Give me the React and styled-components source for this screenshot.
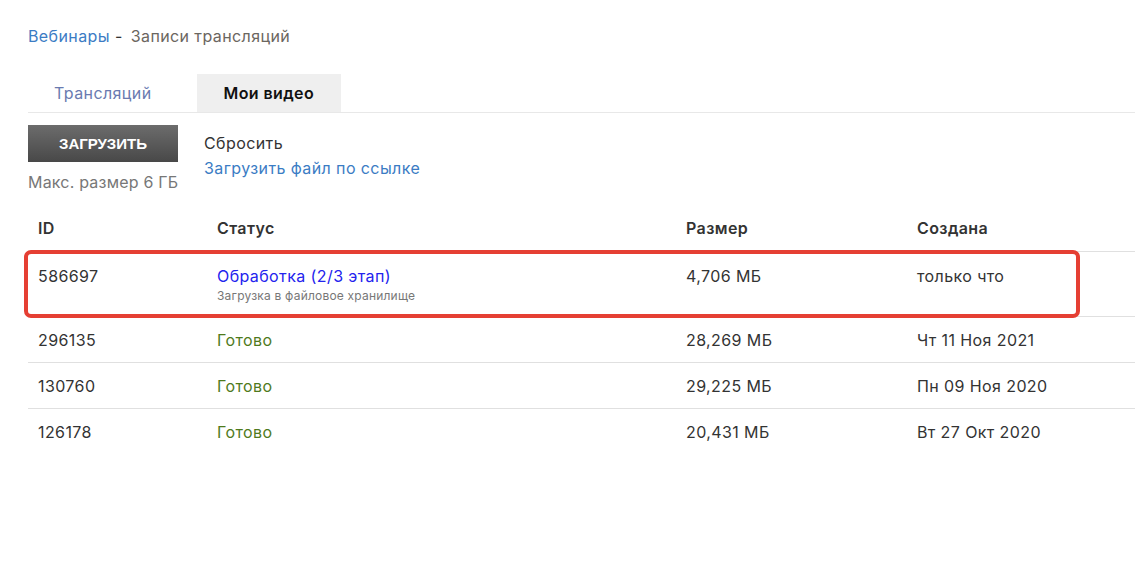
import styled, { createGlobalStyle } from "styled-components";

const GlobalStyle = createGlobalStyle`
  body {
    margin: 0;
    background: #fff;
    font-family: Inter, "Noto Sans", "Liberation Sans", sans-serif;
    letter-spacing: 0.4px;
    color: #333;
  }
`;

const videos = [
  { id: "586697", status: "Обработка (2/3 этап)", note: "Загрузка в файловое хранилище", size: "4,706 МБ", created: "только что", processing: true },
  { id: "296135", status: "Готово", size: "28,269 МБ", created: "Чт 11 Ноя 2021" },
  { id: "130760", status: "Готово", size: "29,225 МБ", created: "Пн 09 Ноя 2020" },
  { id: "126178", status: "Готово", size: "20,431 МБ", created: "Вт 27 Окт 2020" },
];

const App = () => {
  return (
    <Page>
      <GlobalStyle />
      <Breadcrumbs>
        <Crumb href="#">Вебинары</Crumb>
        <Sep>-</Sep>
        <Current>Записи трансляций</Current>
      </Breadcrumbs>

      <Tabs>
        <Tab>Трансляций</Tab>
        <Tab active>Мои видео</Tab>
      </Tabs>

      <Toolbar>
        <UploadCol>
          <UploadButton>Загрузить</UploadButton>
          <Hint>Макс. размер 6 ГБ</Hint>
        </UploadCol>
        <Actions>
          <Reset>Сбросить</Reset>
          <LinkUpload href="#">Загрузить файл по ссылке</LinkUpload>
        </Actions>
      </Toolbar>

      <Table>
        <HeadRow>
          <HeadCell>ID</HeadCell>
          <HeadCell>Статус</HeadCell>
          <HeadCell>Размер</HeadCell>
          <HeadCell>Создана</HeadCell>
        </HeadRow>
        {videos.map((v) => (
          <Row key={v.id} tall={v.processing}>
            <Cell>{v.id}</Cell>
            <Cell>
              <Status processing={v.processing}>{v.status}</Status>
              {v.note && <Note>{v.note}</Note>}
            </Cell>
            <Cell>{v.size}</Cell>
            <Cell>{v.created}</Cell>
            {v.processing && <Highlight />}
          </Row>
        ))}
      </Table>
    </Page>
  );
};

export default App;

const Page = styled.div`
  padding: 26px 0 0 28px;
`;

const Breadcrumbs = styled.div`
  display: flex;
  align-items: center;
  font-size: 16px;
  line-height: 20px;
`;

const Crumb = styled.a`
  color: #3b7cc4;
  text-decoration: none;
`;

const Sep = styled.span`
  color: #333;
  margin: 0 8px 0 5px;
`;

const Current = styled.span`
  color: #6b6660;
`;

const Tabs = styled.div`
  display: flex;
  margin-top: 28px;
  border-bottom: 1px solid #e8e8e8;
`;

const Tab = styled.div`
  height: 38px;
  display: flex;
  align-items: center;
  padding: ${(p) => (p.active ? "0 27px" : "0 45px 0 26px")};
  font-size: 16px;
  font-weight: ${(p) => (p.active ? 600 : 400)};
  color: ${(p) => (p.active ? "#111" : "#6a7ab0")};
  background: ${(p) => (p.active ? "#efefef" : "transparent")};
`;

const Toolbar = styled.div`
  display: flex;
  margin-top: 12px;
  gap: 26px;
`;

const UploadCol = styled.div`
  width: 150px;
  display: flex;
  flex-direction: column;
  gap: 10px;
`;

const UploadButton = styled.button`
  width: 150px;
  height: 37px;
  border: none;
  background: linear-gradient(#6c6c6c, #484848);
  color: #fff;
  font-family: "Liberation Sans", Arial, sans-serif;
  font-weight: 700;
  font-size: 15px;
  letter-spacing: 0;
  text-transform: uppercase;
  cursor: pointer;
`;

const Hint = styled.div`
  font-size: 16px;
  letter-spacing: 0.2px;
  white-space: nowrap;
  color: #777;
`;

const Actions = styled.div`
  display: flex;
  flex-direction: column;
  padding-top: 8px;
  gap: 5px;
  font-size: 16px;
`;

const Reset = styled.div`
  color: #333;
`;

const LinkUpload = styled.a`
  color: #3b7cc4;
  text-decoration: none;
`;

const Table = styled.div`
  margin-top: 17px;
`;

const grid = `
  display: grid;
  grid-template-columns: 179px 469px 231px 1fr;
`;

const HeadRow = styled.div`
  ${grid}
  height: 42px;
  align-items: center;
  border-bottom: 1px solid #e0e0e0;
`;

const HeadCell = styled.div`
  padding-left: 10px;
  font-size: 16px;
  font-weight: 600;
  color: #333;
  padding-bottom: 4px;
`;

const Row = styled.div`
  ${grid}
  position: relative;
  height: ${(p) => (p.tall ? "50px" : "45px")};
  border-bottom: 1px solid #e0e0e0;
  align-items: ${(p) => (p.tall ? "start" : "center")};
  padding-top: ${(p) => (p.tall ? "14px" : "0")};

  &:last-child {
    border-bottom: none;
  }
`;

const Cell = styled.div`
  padding-left: 10px;
  font-size: 16px;
  color: #333;
`;

const Status = styled.div`
  color: ${(p) => (p.processing ? "#2323ee" : "#4f7a1c")};
`;

const Note = styled.div`
  font-size: 12px;
  letter-spacing: 0.2px;
  color: #777;
  margin-top: 2px;
`;

const Highlight = styled.div`
  position: absolute;
  left: -4px;
  top: -2px;
  width: 1056px;
  bottom: -2px;
  border: 4px solid #e53f33;
  border-radius: 7px;
  box-sizing: border-box;
  pointer-events: none;
`;
